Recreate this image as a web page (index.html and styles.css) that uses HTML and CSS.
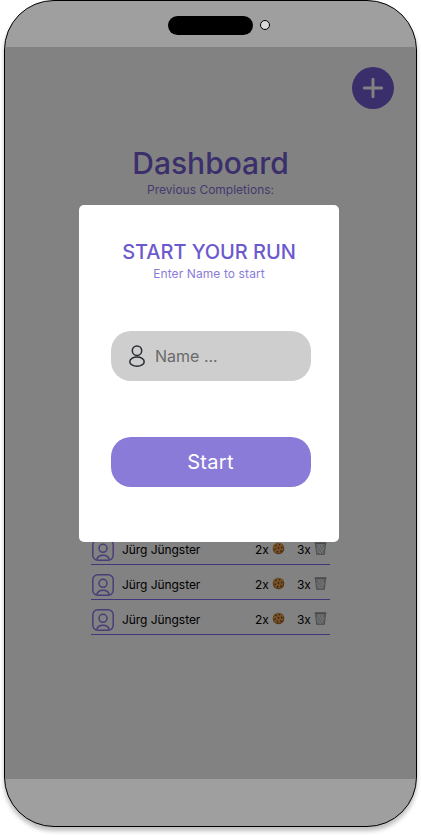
FILE: index.html
```html
<!DOCTYPE html>
<html lang="en">
<head>
<meta charset="utf-8">
<title>Dashboard</title>
<link rel="stylesheet" href="styles.css">
</head>
<body>
<svg class="defs" width="0" height="0" aria-hidden="true">
  <symbol id="avatar" viewBox="0 0 24 24"><g fill="none" stroke="currentColor" stroke-width="1.5"><rect x="1.8" y="1.8" width="20.4" height="20.4" rx="5"/><circle cx="12" cy="10.3" r="4"/><path d="M5.8 21.6c.6-3 3-4.4 6.2-4.4s5.600 1.400 6.200 4.400"/></g></symbol>
  <symbol id="cookie" viewBox="0 0 13 13"><circle cx="6.500" cy="6.500" r="5.800" fill="#50300f"/><circle cx="6.300" cy="6" r="5.200" fill="#755027"/><g fill="#24140b"><circle cx="4" cy="3.500" r=".7"/><circle cx="7.600" cy="2.700" r=".6"/><circle cx="6.500" cy="6" r=".8"/><circle cx="9.800" cy="5.500" r=".7"/><circle cx="3" cy="7.300" r=".7"/><circle cx="5.500" cy="9.700" r=".7"/><circle cx="9" cy="9" r=".8"/></g></symbol>
  <symbol id="trash" viewBox="0 0 13 13"><path d="M1.300 1h10.400l-1.300 11.500H2.700z" fill="#5b5d5f"/><path d="M3.500 2l5.700 9.500M6.500 2l3.500 6M9.500 2L3.300 11M6.500 2L2.800 7M10.300 5l-4.500 7M2.500 6l4 6" stroke="#7b7d7f" stroke-width=".7" fill="none"/><path d="M.7 1h11.600" stroke="#3b3d3f" stroke-width="1.200"/><path d="M1.300 1.500l1.400 11M11.700 1.500l-1.300 11M2.700 12.400h7.700" stroke="#454749" stroke-width=".7"/></symbol>
</svg>
<div class="phone">
  <header class="bar top"><span class="speaker"></span><span class="camera"></span></header>
  <main class="screen">
    <button class="add" aria-label="Add"><svg width="20" height="20" viewBox="0 0 20 20"><path d="M10 1.200v17.600M1.200 10h17.600" stroke="#828282" stroke-width="2.900" stroke-linecap="round"/></svg></button>
    <h1 class="title">Dashboard</h1>
    <p class="subtitle">Previous Completions:</p>
    <ul class="list">
      <li class="row"><svg class="avatar"><use href="#avatar"/></svg><span class="name">Jürg Jüngster</span><span class="cookies">2x <svg class="item"><use href="#cookie"/></svg></span><span class="cups">3x <svg class="item"><use href="#trash"/></svg></span></li>
      <li class="row"><svg class="avatar"><use href="#avatar"/></svg><span class="name">Jürg Jüngster</span><span class="cookies">2x <svg class="item"><use href="#cookie"/></svg></span><span class="cups">3x <svg class="item"><use href="#trash"/></svg></span></li>
      <li class="row"><svg class="avatar"><use href="#avatar"/></svg><span class="name">Jürg Jüngster</span><span class="cookies">2x <svg class="item"><use href="#cookie"/></svg></span><span class="cups">3x <svg class="item"><use href="#trash"/></svg></span></li>
    </ul>
  </main>
  <footer class="bar"></footer>
  <section class="modal">
    <h2 class="modal-title">START YOUR RUN</h2>
    <p class="modal-text">Enter Name to start</p>
    <div class="field">
      <svg width="18" height="24" viewBox="0 0 18 24" fill="none" stroke="#292d32" stroke-width="1.500"><circle cx="9" cy="6.700" r="4.700"/><ellipse cx="9" cy="17.700" rx="7.200" ry="4.600"/></svg>
      <span class="placeholder">Name ...</span>
    </div>
    <button class="start">Start</button>
  </section>
</div>
</body>
</html>
```
FILE: styles.css
```css
* { box-sizing: border-box; }
body { margin: 0; min-height: 835px; background: #fff; font-family: Inter, "Liberation Sans", sans-serif; }
h1, h2, p, ul { margin: 0; padding: 0; font-weight: 400; }
button { border: 0; padding: 0; font-family: inherit; }
svg { display: block; flex: none; }
.defs { position: absolute; }
.phone {
  position: relative;
  display: flex;
  flex-direction: column;
  width: 413px;
  height: 827px;
  margin-left: 4px;
  border: 1px solid #000;
  border-radius: 50px;
  background: #9f9f9f;
  box-shadow: 0 4px 4px rgba(0, 0, 0, .25);
}
.bar { height: 47px; flex: none; }
.top { display: flex; height: 46px; padding: 15px 0 0 163px; }
.speaker { width: 85px; height: 19px; border-radius: 10px; background: #000; }
.camera { width: 10px; height: 10px; margin: 4px 0 0 7px; border: 1px solid #000; border-radius: 50%; background: #d9d9d9; }
.screen { display: flex; flex-direction: column; align-items: center; flex: 1; background: #828282; }
.add { display: flex; align-items: center; justify-content: center; width: 42px; height: 42px; margin: 20px 22px 0 0; align-self: flex-end; border-radius: 50%; background: #3a2e6b; }
.title { margin-top: 34px; font-size: 30px; line-height: 40px; font-weight: 500; color: #3a2e6b; white-space: nowrap; }
.subtitle { font-size: 12px; line-height: 14px; color: #46396f; }
.list { width: 239px; margin-top: 333px; list-style: none; }
.row { display: flex; align-items: center; height: 35px; padding-top: 5px; border-bottom: 1px solid #40377a; font-size: 12px; letter-spacing: -.06px; color: #000; }
.avatar { width: 24px; height: 24px; color: #493d78; }
.name { width: 133px; margin-left: 7px; }
.cookies, .cups { display: flex; align-items: center; gap: 3px; }
.cookies { width: 42px; }
.item { width: 13px; height: 13px; margin-top: -2px; }
.modal {
  position: absolute;
  top: 204px;
  left: 74px;
  display: flex;
  flex-direction: column;
  width: 260px;
  height: 337px;
  padding: 34px 28px 0 32px;
  border-radius: 5px;
  background: #fff;
}
.modal-title { padding-right: 4px; font-size: 20px; line-height: 26px; font-weight: 500; letter-spacing: -.05px; text-align: center; color: #6c5acd; white-space: nowrap; }
.modal-text { padding-right: 4px; font-size: 12px; line-height: 17px; letter-spacing: .1px; text-align: center; color: #8b7cd8; }
.field { display: flex; align-items: center; height: 50px; margin-top: 49px; padding-left: 17px; border-radius: 20px; background: #cecece; }
.placeholder { margin-left: 9px; font-size: 16px; color: #6a6a6a; }
.start { height: 50px; margin-top: 56px; padding-right: 1px; border-radius: 20px; background: #8a7bd8; color: #fff; font-size: 20px; letter-spacing: .3px; }
```
